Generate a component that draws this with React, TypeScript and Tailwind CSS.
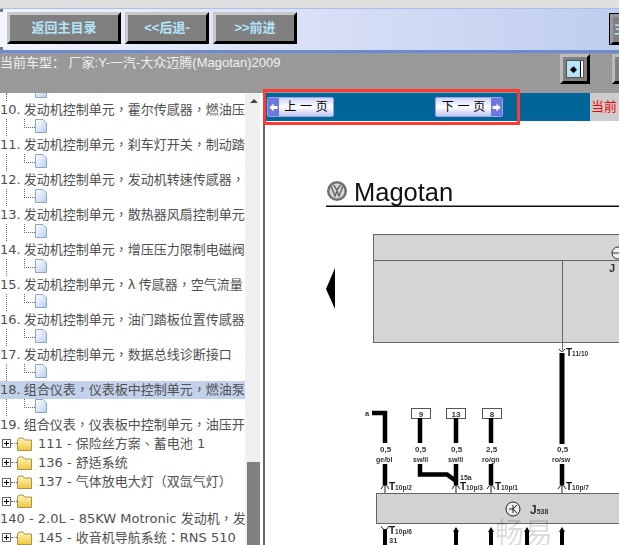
import { Fragment } from 'react';

const cjk = { fontFamily: '"DejaVu Sans", "Noto Sans CJK TC", sans-serif' };
const arial = { fontFamily: '"Liberation Sans", "Noto Sans CJK SC", sans-serif' };

const rows = [
  '10. 发动机控制单元，霍尔传感器，燃油压',
  '11. 发动机控制单元，刹车灯开关，制动踏',
  '12. 发动机控制单元，发动机转速传感器，',
  '13. 发动机控制单元，散热器风扇控制单元',
  '14. 发动机控制单元，增压压力限制电磁阀',
  '15. 发动机控制单元，λ 传感器，空气流量',
  '16. 发动机控制单元，油门踏板位置传感器',
  '17. 发动机控制单元，数据总线诊断接口',
  '18. 组合仪表，仪表板中控制单元，燃油泵',
  '19. 组合仪表，仪表板中控制单元，油压开',
];

function PageIcon() {
  return (
    <svg width="12" height="14" viewBox="0 0 12 14" className="shrink-0">
      <defs>
        <linearGradient id="pg" x1="0" y1="0" x2="1" y2="1">
          <stop offset="0" stopColor="#ffffff" />
          <stop offset="1" stopColor="#b9cff0" />
        </linearGradient>
      </defs>
      <path d="M0.5 0.5H8L11.5 4V13.5H0.5Z" fill="url(#pg)" stroke="#8ea6cf" />
    </svg>
  );
}

function FolderIcon() {
  return (
    <svg width="15" height="14" viewBox="0 0 15 14" className="shrink-0">
      <defs>
        <linearGradient id="fd" x1="0" y1="0" x2="0" y2="1">
          <stop offset="0" stopColor="#fff6c0" />
          <stop offset="1" stopColor="#efc63c" />
        </linearGradient>
      </defs>
      <path d="M0.5 3L2 1H6L7.5 3H14.5V13.5H0.5Z" fill="url(#fd)" stroke="#a8924c" />
    </svg>
  );
}

function PageRow({ height = 17 }: { height?: number }) {
  return (
    <div className="flex pl-[6px] items-end overflow-hidden" style={{ height }}>
      <div className="h-full border-l border-dotted border-[#666]" />
      <div className="w-[17px]" />
      <div className="flex items-start h-[17px] shrink-0">
        <div className="h-[9px] w-[11px] border-l border-b border-dotted border-[#666]" />
        <PageIcon />
      </div>
    </div>
  );
}

function FolderRow({ label, height }: { label: string; height: number }) {
  return (
    <div className="flex items-center pl-[2px]" style={{ height }}>
      <div className="relative w-[9px] h-[9px] border border-[#666] bg-white shrink-0">
        <div className="absolute left-[1px] top-[3px] w-[5px] h-px bg-black" />
        <div className="absolute left-[3px] top-[1px] w-px h-[5px] bg-black" />
      </div>
      <div className="w-[6px] border-t border-dotted border-[#666] shrink-0" />
      <FolderIcon />
      <span className="ml-[6px] text-[13px] text-[#505050] whitespace-nowrap">{label}</span>
    </div>
  );
}

function ToolButton({ label, className }: { label: string; className: string }) {
  return (
    <button
      style={arial}
      className={`h-[32px] bg-[#808080] border-[3px] border-t-[#c8c8c8] border-l-[#c8c8c8] border-b-black border-r-black text-[13px] font-bold text-[#b5e4fb] ${className}`}
    >
      {label}
    </button>
  );
}

function BlockArrow({ dir }: { dir: 'l' | 'r' }) {
  return (
    <span className="w-[11px] h-full bg-[#6c78dc] flex items-center justify-center shrink-0">
      <svg width="9" height="9" viewBox="0 0 9 9" className={dir === 'r' ? 'rotate-180' : ''}>
        <path d="M0.5 4.5L4.5 0.5V3H8.5V6H4.5V8.5Z" fill="#fff" />
      </svg>
    </span>
  );
}

function NavButton({ dir, className }: { dir: 'l' | 'r'; className: string }) {
  return (
    <div
      className={`flex items-center h-[20px] border border-[#9aa4e4] rounded-[2px] bg-gradient-to-b from-[#cdd2f6] via-white to-[#c0c6f0] text-[12px] text-black ${className}`}
    >
      {dir === 'l' && <BlockArrow dir="l" />}
      <span className="flex-1 text-center whitespace-pre">{dir === 'l' ? '上 一 页' : '下 一 页'}</span>
      {dir === 'r' && <BlockArrow dir="r" />}
    </div>
  );
}

function Label({ x, y, t, size = 7.5 }: { x: number; y: number; t: string; size?: number }) {
  return (
    <text x={x} y={y} fontFamily='"Liberation Sans", sans-serif' fontSize={size} fontWeight="700" fill="#333">
      {t}
    </text>
  );
}

function PinLabel({ x, y, t }: { x: number; y: number; t: string }) {
  return (
    <text x={x} y={y} fontFamily='"Liberation Sans", sans-serif' fontWeight="700" fill="#333" fontSize="6.6">
      <tspan fontSize="10" fill="#111">
        T
      </tspan>
      {t}
    </text>
  );
}

function Diagram() {
  const pins = [
    ['10p/2', 385],
    ['10p/3', 456],
    ['10p/1', 491],
    ['10p/7', 562],
  ] as const;
  const wires = [
    ['0,5', 'ge/bl', 380, 376],
    ['0,5', 'sw/ll', 415, 413],
    ['0,5', 'sw/ll', 451, 448],
    ['2,5', 'ro/gn', 486, 482],
    ['0,5', 'ro/sw', 557, 552],
  ] as const;
  const boxes = [
    ['9', 411],
    ['13', 446],
    ['8', 482],
  ] as const;
  return (
    <svg viewBox="265 121 354 424" className="w-[354px] h-[424px] blur-[0.4px]">
      {/* VW badge */}
      <circle cx="337" cy="191" r="10" fill="#707070" />
      <circle cx="337" cy="191" r="7.5" fill="#d8d8d8" />
      <path d="M331 186L335 196L337 191L339 196L343 186M333.5 185L337 190L340.5 185" fill="none" stroke="#666" strokeWidth="1.4" />
      <text x="354" y="201" fontFamily='"Liberation Sans", sans-serif' fontSize="25.5" fill="#111">
        Magotan
      </text>
      <rect x="326" y="205.5" width="293" height="1.5" fill="#111" />
      <path d="M326 289L335 268V309Z" fill="#000" />

      {/* upper unit */}
      <rect x="373.5" y="234.5" width="250" height="108" fill="#d5d5d5" stroke="#666" />
      <path d="M373 260.5H619M562.5 260V350" stroke="#666" fill="none" />
      <circle cx="618" cy="253" r="6" fill="#eee" stroke="#333" />
      <path d="M612 253H619" stroke="#333" />
      <Label x={609} y={272} t="J" size={11} />
      <path d="M559 349Q562 354 565 349" fill="none" stroke="#222" />
      <PinLabel x={566} y={356} t="11/10" />
      <rect x="559.5" y="353" width="5" height="91" fill="#000" />

      {/* wires */}
      <Label x={365} y={416} t="a" />
      <path d="M372 413H385V443" fill="none" stroke="#000" strokeWidth="4.5" />
      {boxes.map(([t, x]) => (
        <Fragment key={t}>
          <rect x={x + 0.5} y="408.5" width="19" height="10" fill="#fff" stroke="#555" />
          <text x={x + 10} y="417" textAnchor="middle" fontFamily='"Liberation Sans", sans-serif' fontSize="8" fontWeight="700" fill="#333">
            {t}
          </text>
        </Fragment>
      ))}
      <path d="M420 418V443M456 418V443M491 418V443" stroke="#000" strokeWidth="4.5" />
      {wires.map(([a, b, ax, bx]) => (
        <Fragment key={bx}>
          <Label x={ax} y={452} t={a} size={8} />
          <Label x={bx} y={462} t={b} size={7} />
        </Fragment>
      ))}
      <path d="M385 464V485M491 464V485M562 464V485M456 464V485M420 464V474.5H447L456 481" fill="none" stroke="#000" strokeWidth="4.5" />
      <Label x={460} y={480} t="15a" size={7} />
      {pins.map(([t, x]) => (
        <Fragment key={t}>
          <path d={`M${x - 4} 489Q${x} 481 ${x + 4} 489M${x} 485V493`} fill="none" stroke="#222" />
          <PinLabel x={x + 4} y={490} t={t} />
        </Fragment>
      ))}

      {/* lower unit */}
      <rect x="376.5" y="493.5" width="250" height="30" fill="#d2d2d2" stroke="#666" />
      <circle cx="513" cy="509" r="7" fill="#eee" stroke="#222" />
      <path d="M509 509H513M513 505V513M513 509L517 505M513 509L517 513" stroke="#222" fill="none" />
      <text x="530" y="514" fontFamily='"Liberation Sans", sans-serif' fontWeight="700" fill="#333" fontSize="7">
        <tspan fontSize="12">J</tspan>538
      </text>
      <path d="M385 529V545" stroke="#000" strokeWidth="4" />
      <path d="M381 526Q385 534 389 526" fill="none" stroke="#222" />
      <PinLabel x={389} y={534} t="10p/6" />
      <Label x={389} y={543} t="31" />
      {[456, 491, 527, 562].map((x) => (
        <path key={x} d={`M${x - 3} 532L${x} 527L${x + 3} 532H${x + 2}V545H${x - 2}V532Z`} fill="#000" />
      ))}
      <text x="495" y="544" fontFamily='"Noto Sans CJK SC", sans-serif' fontSize="29" fill="#000" fillOpacity="0.14">
        畅易
      </text>
    </svg>
  );
}

export default function App() {
  return (
    <div className="relative w-[619px] h-[545px] overflow-hidden bg-white" style={cjk}>
      <div className="h-[8px] bg-[#dfdfdf]" />

      {/* toolbar */}
      <div className="relative h-[45px] flex items-start pt-[3px] pl-[7px] gap-[4px] border-t border-[#a9c0ec] border-b-[3px] border-b-[#6d8bd2] bg-gradient-to-r from-[#f2f4fd] to-[#bfcdee]">
        <div className="absolute left-0 top-0 w-[3px] h-[3px] bg-[#777]" />
        <div className="absolute left-0 bottom-0 w-[3px] h-[3px] bg-[#777]" />
        <ToolButton label="返回主目录" className="w-[114px]" />
        <ToolButton label="<<后退-" className="w-[84px]" />
        <ToolButton label=">>前进" className="w-[84px]" />
        <div className="ml-auto -mr-[21px] mt-[1px] border-t border-l border-black">
          <div className="w-[30px] h-[31px] bg-[#808080] border-[3px] border-t-[#999] border-l-[#999] border-b-black border-r-black text-[13px] font-bold leading-[24px] text-[#b5e4fb] pl-[1px]">
            主
          </div>
        </div>
      </div>

      {/* car info */}
      <div className="h-[40px] bg-[#999] flex items-start">
        <span style={arial} className="mt-[1px] text-[13px] leading-[17px] text-[#f0f0f0] whitespace-nowrap">
          当前车型： 厂家:Y-一汽-大众迈腾(Magotan)2009
        </span>
        <div className="ml-auto flex gap-[22px] -mr-[23px] mt-[1px]">
          <div className="w-[30px] h-[30px] bg-[#808080] border-[3px] border-t-[#bbb] border-l-[#bbb] border-b-black border-r-black p-[3px]">
            <div className="h-full bg-[#b5e4fb] flex border border-[#555]">
              <div className="flex-1 flex items-center justify-center text-[9px] leading-none text-black">◆</div>
              <div className="w-px bg-black" />
              <div className="w-[2px] bg-white" />
            </div>
          </div>
          <div className="w-[30px] h-[30px] bg-[#808080] border-[3px] border-t-[#bbb] border-l-[#bbb] border-b-black border-r-black" />
        </div>
      </div>

      {/* panes */}
      <div className="flex h-[452px]">
        <div className="w-[245px] overflow-hidden shrink-0 text-[13px] text-[#505050]">
          <PageRow height={8} />
          {rows.map((r, i) => (
            <Fragment key={r}>
              <div className={`h-[18px] leading-[18px] whitespace-nowrap overflow-hidden [word-spacing:-1px] ${i === 8 ? 'bg-[#c2d2ea]' : ''}`}>{r}</div>
              {i < 9 && <PageRow />}
            </Fragment>
          ))}
          <FolderRow label="111 - 保险丝方案、蓄电池 1" height={19} />
          <FolderRow label="136 - 舒适系统" height={19} />
          <FolderRow label="137 - 气体放电大灯（双氙气灯）" height={20} />
          <FolderRow label="" height={18} />
          <div className="h-[18px] leading-[18px] whitespace-nowrap overflow-hidden">140 - 2.0L - 85KW Motronic 发动机，发</div>
          <FolderRow label="145 - 收音机导航系统：RNS 510" height={19} />
        </div>

        {/* scrollbar */}
        <div className="w-[15px] shrink-0 bg-[#f0f0f0] flex flex-col items-center pl-[2px]">
          <div className="mt-[6px] w-0 h-0 border-x-[4px] border-x-transparent border-b-[4px] border-b-[#444]" />
          <div className="mt-auto w-[13px] h-[83px] bg-[#808080]" />
        </div>
        <div className="w-[3px] shrink-0 bg-white" />
        <div className="w-[2px] shrink-0 bg-[#666]" />

        <div className="flex-1 min-w-0 flex flex-col">
          <div className="h-[28px] flex shrink-0 bg-[#006699]">
            <div className="flex-1 flex items-center pl-[2px]">
              <NavButton dir="l" className="w-[67px]" />
              <NavButton dir="r" className="w-[68px] ml-[101px]" />
            </div>
            <div className="w-[29px] bg-[#ccc] text-[13px] leading-[28px] text-[#f00] whitespace-nowrap overflow-hidden pl-[1px]">当前</div>
          </div>
          <Diagram />
        </div>
      </div>

      {/* red annotation */}
      <div className="absolute left-[263px] top-[89px] w-[257px] h-[36px] border-[3px] border-[#ff3b30]" />
    </div>
  );
}
